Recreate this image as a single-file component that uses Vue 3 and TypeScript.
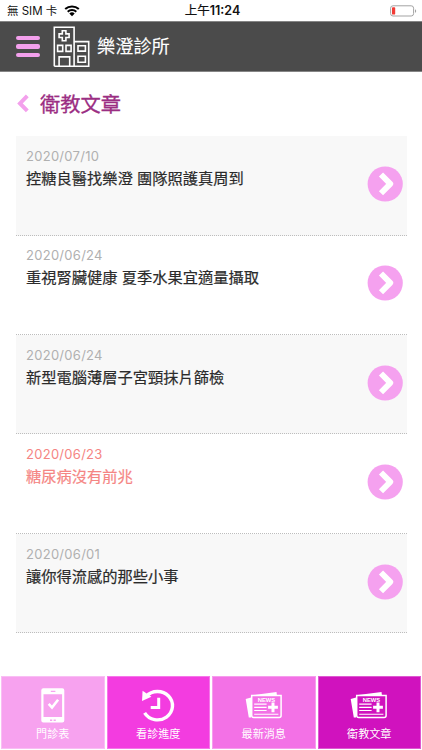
<script setup lang="ts">
interface Article {
  date: string
  title: string
  visited?: boolean
}

interface Tab {
  label: string
  icon: 'phone' | 'history' | 'news'
  tone: string
}

const articles: Article[] = [
  { date: '2020/07/10', title: '控糖良醫找樂澄 團隊照護真周到' },
  { date: '2020/06/24', title: '重視腎臟健康 夏季水果宜適量攝取' },
  { date: '2020/06/24', title: '新型電腦薄層子宮頸抹片篩檢' },
  { date: '2020/06/23', title: '糖尿病沒有前兆', visited: true },
  { date: '2020/06/01', title: '讓你得流感的那些小事' },
]

const tabs: Tab[] = [
  { label: '門診表', icon: 'phone', tone: 'tone-light' },
  { label: '看診進度', icon: 'history', tone: 'tone-bright' },
  { label: '最新消息', icon: 'news', tone: 'tone-mid' },
  { label: '衛教文章', icon: 'news', tone: 'tone-deep' },
]
</script>

<template>
  <div class="screen">
    <div class="status">
      <div class="carrier">
        <span>無 SIM 卡</span>
        <svg class="wifi" width="16" height="12" viewBox="0 0 16 12">
          <path d="M1.2 4.1a9.9 9.9 0 0 1 13.6 0" />
          <path d="M3.7 6.7a6.3 6.3 0 0 1 8.6 0" />
          <path class="solid" d="M8 11.3 5.3 8.6a3.9 3.9 0 0 1 5.4 0z" />
        </svg>
      </div>
      <div class="time"><span>上午</span>11:24</div>
      <svg class="battery" width="28" height="12" viewBox="0 0 28 12">
        <rect class="shell" x="1.6" y=".8" width="23" height="10.2" rx="2.4" />
        <rect class="charge" x="3" y="2.2" width="3.2" height="7.4" rx=".9" />
        <path class="cap" d="M26 4.2c1.6.5 1.6 3.1 0 3.6z" />
      </svg>
    </div>

    <header class="header">
      <button class="menu" aria-label="選單"><i></i><i></i><i></i></button>
      <svg class="logo" width="38" height="42" viewBox="0 0 38 42">
        <path d="M1.3 40.3V1.3h19.8v39M21.1 15.6h14.6v24.7H1.3" />
        <path d="M9.3 4.7h3.6v3.2h3.2v3.6h-3.2v3.2H9.3v-3.2H6.1V7.9h3.2z" />
        <path d="M4.6 19.4h5.1v6H4.6zM13 19.4h5.1v6H13zM25 19.7h7.4v5.4H25zM25 30.2h7.4v6H25z" />
        <path d="M6.1 40.3v-9.4h10.6v9.4" />
      </svg>
      <span class="brand">樂澄診所</span>
    </header>

    <main class="content">
      <div class="heading">
        <svg width="13" height="20" viewBox="0 0 13 20"><path d="M11.3 1.9 4 9.4l7.3 7.5" /></svg>
        <h1>衛教文章</h1>
      </div>
      <ul class="list">
        <li v-for="article in articles" :key="article.title" class="row" :class="{ visited: article.visited }">
          <div class="text">
            <time>{{ article.date }}</time>
            <h2>{{ article.title }}</h2>
          </div>
          <svg class="go" width="36" height="36" viewBox="0 0 36 36">
            <circle cx="18.2" cy="18" r="17.6" />
            <path d="m14 8.5 9.3 9.4-9.3 9.4" />
          </svg>
        </li>
      </ul>
    </main>

    <nav class="tabs">
      <a v-for="tab in tabs" :key="tab.label" class="tab" :class="tab.tone">
        <svg v-if="tab.icon === 'phone'" class="icon" width="40" height="36" viewBox="0 0 40 36">
          <path class="fill" fill-rule="evenodd" d="M10.8.2h18.5a2 2 0 0 1 2 2v30.3a2 2 0 0 1-2 2H10.3a2 2 0 0 1-2-2V2.2a2 2 0 0 1 2-2zM10.5 6.3v22.6h18.6V6.3zM17.8 2.8V4h4.6V2.8zM17 31.6v1.3h2.2v-1.3zM20.6 31.6v1.3h2.2v-1.3z" />
          <path class="check" d="m15.7 15.8 3.3 3.7 6.1-7.8" />
        </svg>
        <svg v-else-if="tab.icon === 'history'" class="icon" width="40" height="36" viewBox="0 0 40 36">
          <path class="ring" d="M8.2 8.3A15 14.2 0 1 1 6.6 24.9" />
          <path class="fill" d="M4.6 2.8 13.4 8.8 4 12.9z" />
          <path class="hands" d="M20.7 9.8v9.7h-8" />
        </svg>
        <svg v-else class="icon" width="40" height="36" viewBox="0 0 40 36">
          <path class="fill" d="M1.7 10.9 7 9.6v19.8l-2.2.2zM9 7l23.5-2.9.4 3z" />
          <path class="page" d="M7.7 7.5h29.4v20a2 2 0 0 1-2 2H9.7a2 2 0 0 1-2-2z" />
          <text x="13.7" y="13.7" textLength="17.5" lengthAdjust="spacingAndGlyphs">NEWS</text>
          <path class="lines" d="M10.2 16.1h12.4M10.2 19.4h12.4M10.2 22.5h12.4M10.2 26.2h24.2" />
          <path class="plus" d="M29 14.4v9.8M24.1 19.3h9.8" />
        </svg>
        <span>{{ tab.label }}</span>
      </a>
    </nav>
  </div>
</template>

<style>
body {
  margin: 0;
  background: #fff;
}
</style>

<style scoped>
.screen {
  width: 422px;
  height: 750px;
  display: flex;
  flex-direction: column;
  overflow: hidden;
  background: #fff;
  font-family: "Liberation Sans", "Noto Sans CJK TC", sans-serif;
}
svg {
  display: block;
  fill: none;
}
.status {
  height: 21px;
  box-sizing: border-box;
  padding: 0 5px 0 7px;
  display: grid;
  grid-template-columns: 1fr auto 1fr;
  align-items: center;
  color: #111;
  font-family: Inter, "Noto Sans CJK TC", sans-serif;
  font-size: 11.5px;
  line-height: 20px;
}
.carrier {
  display: flex;
  align-items: center;
  gap: 7px;
  white-space: nowrap;
}
.wifi path {
  stroke: #000;
  stroke-width: 2;
}
.wifi .solid {
  fill: #000;
  stroke: none;
}
.time {
  padding-left: 1px;
  font-size: 12.5px;
  font-weight: 600;
}
.time span {
  font-weight: 400;
  -webkit-text-stroke: 0.2px #111;
}
.battery {
  justify-self: end;
}
.shell {
  stroke: #a3a3a3;
}
.charge {
  fill: #f23b35;
}
.cap {
  fill: #a3a3a3;
}
.header {
  height: 51px;
  box-sizing: border-box;
  border-top: 1px solid #858585;
  border-bottom: 1px solid #858585;
  background: #4b4b4b;
  padding-left: 16px;
  display: flex;
  align-items: center;
}
.menu {
  width: 24px;
  padding: 0;
  border: 0;
  background: none;
  display: flex;
  flex-direction: column;
  gap: 4px;
}
.menu i {
  height: 4.2px;
  border-radius: 2px;
  background: #f3a0ec;
}
.logo {
  margin-left: 13px;
  stroke: #fff;
  stroke-width: 1.6;
}
.brand {
  margin-left: 6px;
  color: #fff;
  font-size: 18.2px;
  line-height: 24px;
  -webkit-text-stroke: 0.12px #fff;
}
.content {
  flex: 1;
  padding: 18px 15px 0 15.6px;
}
.heading {
  height: 28px;
  display: flex;
  align-items: center;
  gap: 11.4px;
}
.heading path {
  stroke: #f3a0ec;
  stroke-width: 4;
}
h1 {
  margin: 0;
  padding-top: 1px;
  color: #9b2e83;
  font-size: 20.3px;
  font-weight: 400;
  line-height: 28px;
  -webkit-text-stroke: 0.3px #9b2e83;
}
.list {
  list-style: none;
  margin: 18.3px 0 0;
  padding: 0;
}
.row {
  height: 99.4px;
  box-sizing: border-box;
  border-bottom: 1px dotted #bdbdbd;
  padding: 0 4px 0 10.4px;
  display: flex;
  justify-content: space-between;
  align-items: flex-start;
  color: #2b2b2b;
}
.row:nth-child(odd) {
  background: #f8f8f8;
}
.text {
  padding-top: 10.8px;
}
time {
  display: block;
  color: #b0b0b0;
  font-family: Inter, sans-serif;
  font-size: 13px;
  line-height: 18px;
  letter-spacing: 0.28px;
}
h2 {
  margin: 2px 0 0;
  font-size: 15.25px;
  font-weight: 400;
  line-height: 24px;
  white-space: nowrap;
  -webkit-text-stroke: 0.2px currentColor;
}
.visited,
.visited time {
  color: #f58583;
}
.go {
  margin-top: 29.7px;
}
.go circle {
  fill: #f5a1ef;
}
.go path {
  stroke: #fff;
  stroke-width: 5.8;
  stroke-linejoin: round;
}
.tabs {
  height: 74px;
  box-sizing: border-box;
  padding: 0 1px 1px;
  display: grid;
  grid-template-columns: repeat(4, 1fr);
  gap: 2px;
}
.tab {
  box-sizing: border-box;
  border: 1px solid rgba(255, 255, 255, 0.3);
  display: flex;
  flex-direction: column;
  align-items: center;
  padding-top: 11px;
  color: #fff;
  font-size: 11.1px;
  line-height: 16px;
}
.tab span {
  margin-top: 2px;
}
.tone-light {
  background: #f7a2ef;
}
.tone-bright {
  background: #f33ce0;
}
.tone-mid {
  background: #f371e6;
}
.tone-deep {
  background: #d012be;
}
.fill {
  fill: #fff;
}
.check {
  stroke: #fff;
  stroke-width: 2.6;
}
.ring {
  stroke: #fff;
  stroke-width: 3.4;
}
.hands {
  stroke: #fff;
  stroke-width: 3;
}
.page {
  stroke: #fff;
  stroke-width: 1.5;
}
.lines {
  stroke: #fff;
  stroke-width: 1.1;
}
.plus {
  stroke: #fff;
  stroke-width: 3;
}
.icon text {
  fill: #fff;
  font: 700 5px "Liberation Sans", sans-serif;
}
</style>
